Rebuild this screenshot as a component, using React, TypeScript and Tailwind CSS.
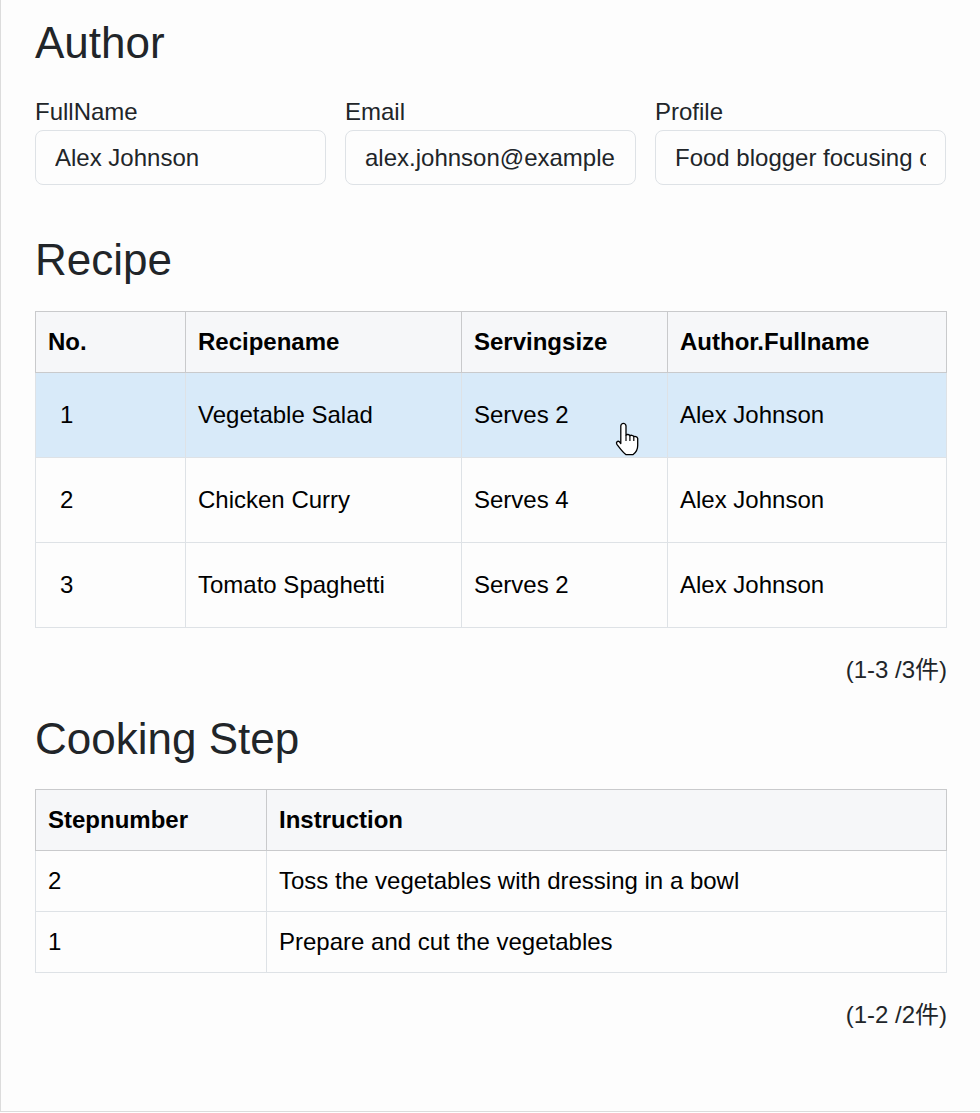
import React from "react";

const author = {
  fullName: "Alex Johnson",
  email: "alex.johnson@example.com",
  profile: "Food blogger focusing on healthy home cooking",
};

const recipes = [
  { no: 1, name: "Vegetable Salad", serving: "Serves 2", author: "Alex Johnson" },
  { no: 2, name: "Chicken Curry", serving: "Serves 4", author: "Alex Johnson" },
  { no: 3, name: "Tomato Spaghetti", serving: "Serves 2", author: "Alex Johnson" },
];

const steps = [
  { n: 2, text: "Toss the vegetables with dressing in a bowl" },
  { n: 1, text: "Prepare and cut the vegetables" },
];

function HandCursor() {
  return (
    <svg width="26" height="34" viewBox="0 0 20 26" className="pointer-events-none absolute left-[151px] top-[49px]">
      <path
        d="M8 1C9 1 10 2 10 3V10C10.5 9.3 12.5 9.3 13 10.5C13.5 9.9 15.5 9.9 16 11.2C16.6 10.8 18.6 11 19 12.5V18C19 21 17.5 23.5 15.5 25H10C8 24 5.5 20.5 3 17.2C2 15.6 3.6 14 5 15.2L6 16.5V3C6 2 7 1 8 1Z"
        fill="#fff"
        stroke="#000"
        strokeWidth="1"
        strokeLinejoin="round"
      />
      <path d="M10 10V14.5M13 10.5V14.5M16 11.2V14.5" stroke="#000" strokeWidth="0.9" fill="none" />
    </svg>
  );
}

function Field({ label, value }: { label: string; value: string }) {
  return (
    <label className="flex flex-col">
      <span className="leading-[36px] text-[#212529]">{label}</span>
      <input
        readOnly
        value={value}
        className="h-[55px] w-full rounded-[8px] border border-[#dee2e6] bg-[#fdfdfd] px-[19px] text-[24px] text-[#212529] outline-none"
      />
    </label>
  );
}

export default function App() {
  return (
    <div
      className="h-[1112px] w-[980px] border-b border-l border-[#dcdcdc] bg-[#fdfdfd] pl-[34px] pr-[33px] pt-4 text-[24px] text-[#212529]"
      style={{ fontFamily: '"Liberation Sans", Arial, "Noto Sans CJK JP", sans-serif' }}
    >
      <h2 className="mb-[25px] text-[44px] leading-[53px]">Author</h2>
      <div className="grid grid-cols-[291px_291px_291px] gap-x-[19px]">
        <Field label="FullName" value={author.fullName} />
        <Field label="Email" value={author.email} />
        <Field label="Profile" value={author.profile} />
      </div>

      <h2 className="mb-[25px] mt-[48px] text-[44px] leading-[53px]">Recipe</h2>
      <table className="w-full table-fixed border-collapse text-black">
        <colgroup>
          <col className="w-[150px]" />
          <col className="w-[276px]" />
          <col className="w-[206px]" />
          <col />
        </colgroup>
        <thead>
          <tr className="bg-[#f6f7f9]">
            {["No.", "Recipename", "Servingsize", "Author.Fullname"].map((h) => (
              <th key={h} className="border border-[#c9cacc] px-3 py-3 text-left font-bold leading-[36px]">
                {h}
              </th>
            ))}
          </tr>
        </thead>
        <tbody>
          {recipes.map((r, i) => (
            <tr key={r.no} className={i === 0 ? "bg-[#d8eaf9]" : ""}>
              <td className="border border-[#dee2e6] px-6 py-6 leading-[36px]">{r.no}</td>
              <td className="border border-[#dee2e6] px-3 py-6 leading-[36px]">{r.name}</td>
              <td className="relative border border-[#dee2e6] px-3 py-6 leading-[36px]">
                {r.serving}
                {i === 0 && <HandCursor />}
              </td>
              <td className="border border-[#dee2e6] px-3 py-6 leading-[36px]">{r.author}</td>
            </tr>
          ))}
        </tbody>
      </table>
      <p className="mt-6 text-right leading-[36px]">(1-3 /3件)</p>

      <h2 className="mb-6 mt-6 text-[44px] leading-[53px]">Cooking Step</h2>
      <table className="w-full table-fixed border-collapse text-black">
        <colgroup>
          <col className="w-[231px]" />
          <col />
        </colgroup>
        <thead>
          <tr className="bg-[#f6f7f9]">
            {["Stepnumber", "Instruction"].map((h) => (
              <th key={h} className="border border-[#c9cacc] px-3 py-3 text-left font-bold leading-[36px]">
                {h}
              </th>
            ))}
          </tr>
        </thead>
        <tbody>
          {steps.map((s) => (
            <tr key={s.n}>
              <td className="border border-[#dee2e6] px-3 py-3 leading-[36px]">{s.n}</td>
              <td className="border border-[#dee2e6] px-3 py-3 leading-[36px]">{s.text}</td>
            </tr>
          ))}
        </tbody>
      </table>
      <p className="mt-6 text-right leading-[36px]">(1-2 /2件)</p>
    </div>
  );
}
